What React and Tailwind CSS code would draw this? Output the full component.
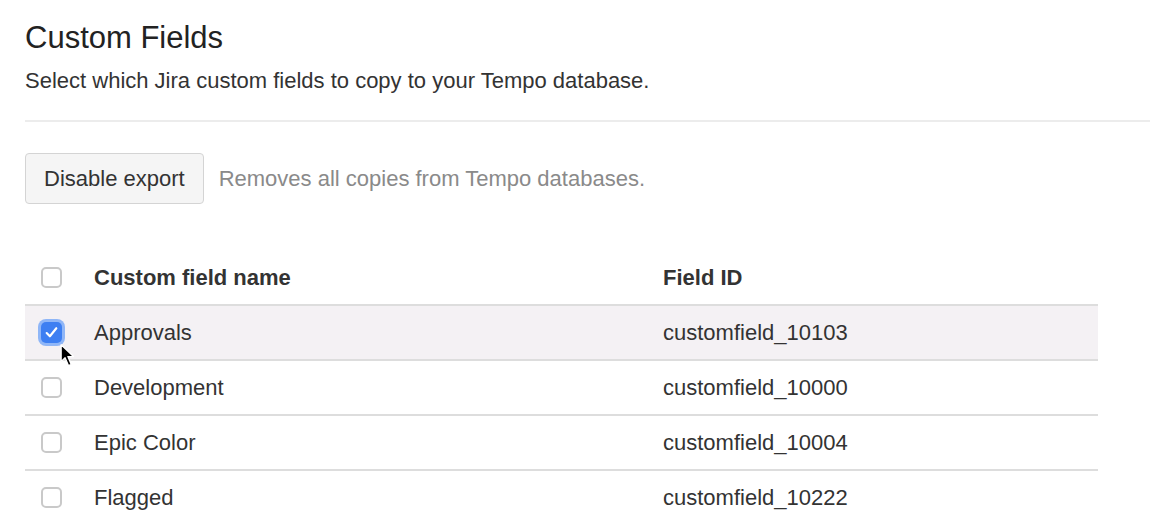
import React from "react";

function Box({ checked }) {
  if (checked) {
    return (
      <div className="relative flex h-[21px] w-[21px] items-center justify-center rounded-[5px] bg-[#3d7ff2] ring-[3px] ring-[#8fb6f7]">
        <svg className="h-[15px] w-[15px]" viewBox="0 0 14 14" fill="none">
          <path d="M2.5 7.5 L5.5 10.5 L11.5 3" stroke="white" strokeWidth="2" strokeLinecap="round" strokeLinejoin="round" />
        </svg>
        <svg className="absolute left-[19px] top-[21px] h-[26px] w-[18px] max-w-none" viewBox="0 0 16 22">
          <path d="M1 1 L1 16 L4.5 12.5 L7.5 19.5 L10 18.5 L7 11.5 L12 11.5 Z" fill="black" stroke="white" strokeWidth="1.2" strokeLinejoin="round" />
        </svg>
      </div>
    );
  }
  return <div className="h-[21px] w-[21px] rounded-[5px] border-2 border-[#c9c9c9] bg-white" />;
}

const rows = [
  { name: "Approvals", id: "customfield_10103", checked: true },
  { name: "Development", id: "customfield_10000" },
  { name: "Epic Color", id: "customfield_10004" },
  { name: "Flagged", id: "customfield_10222" },
];

export default function App() {
  return (
    <div className="h-[520px] w-[1150px] overflow-hidden bg-white pl-[25px] text-[#333] [font-family:'Liberation_Sans',Arial,sans-serif]">
      <h1 className="flex h-[56px] items-end text-[31px] leading-[36px] text-[#222]">Custom Fields</h1>
      <p className="mt-[10px] text-[22px] leading-[30px] text-[#333]">Select which Jira custom fields to copy to your Tempo database.</p>
      <div className="mt-[24px] h-[2px] bg-[#ececec]" />
      <div className="mt-[31px] flex items-center">
        <button className="h-[51px] rounded-[4px] border border-[#d4d4d4] bg-[#f5f5f5] px-[18px] text-[22px] text-[#333]">Disable export</button>
        <span className="ml-[15px] text-[22px] text-[#8a8a8a]">Removes all copies from Tempo databases.</span>
      </div>
      <div className="mt-[46px] w-[1073px]">
        <div className="flex h-[56px] items-center border-b-2 border-[#dddddd]">
          <div className="w-[69px] pl-[16px]"><Box /></div>
          <div className="w-[569px] text-[22px] font-bold text-[#333]">Custom field name</div>
          <div className="text-[22px] font-bold text-[#333]">Field ID</div>
        </div>
        {rows.map((r) => (
          <div key={r.id} className={"relative flex h-[55px] items-center border-b-2 border-[#dddddd] " + (r.checked ? "z-10 bg-[#f4f1f4]" : "bg-white")}>
            <div className="w-[69px] pl-[16px]"><Box checked={r.checked} /></div>
            <div className="w-[569px] text-[22px] text-[#333]">{r.name}</div>
            <div className="text-[22px] text-[#333]">{r.id}</div>
          </div>
        ))}
      </div>
    </div>
  );
}
